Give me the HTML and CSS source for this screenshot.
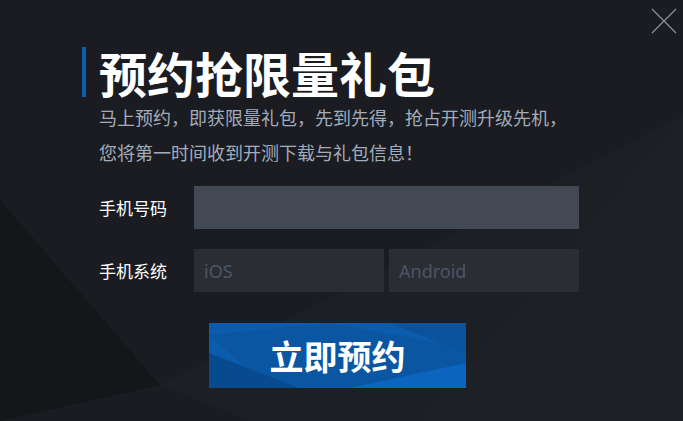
FILE: index.html
```html
<!DOCTYPE html>
<html lang="zh-CN">
<head>
    <meta charset="UTF-8">
    <meta name="viewport" content="width=device-width, initial-scale=1.0">
    <title>预约抢限量礼包</title>
    <link rel="stylesheet" href="styles.css">
</head>
<body>
    <div class="dialog">
        <svg class="bg-shapes" width="683" height="421" viewBox="0 0 683 421">
            <polygon points="0,200 160,385 0,421" fill="#141619"/>
            <polygon points="683,115 683,421 250,421 160,385" fill="#1c1f23"/>
            <polygon points="683,115 683,421 420,421" fill="#1d2024"/>
        </svg>

        <button type="button" class="close-btn" aria-label="关闭">
            <svg width="28" height="28" viewBox="0 0 28 28">
                <path d="M2 2 L26 26 M26 2 L2 26" stroke="#8c9099" stroke-width="1.2" fill="none"/>
            </svg>
        </button>

        <h1 class="title">预约抢限量礼包</h1>
        <p class="intro">马上预约，即获限量礼包，先到先得，抢占开测升级先机，<br>您将第一时间收到开测下载与礼包信息！</p>

        <form id="order-form" class="order-form">
            <div class="form-row">
                <label for="phone">手机号码</label>
                <input type="tel" id="phone" name="phone" class="field field-phone">
            </div>
            <div class="form-row">
                <label>手机系统</label>
                <div class="os-group">
                    <button type="button" class="field os-btn">iOS</button>
                    <button type="button" class="field os-btn">Android</button>
                </div>
            </div>
            <button type="submit" class="submit-btn">
                <svg class="btn-shapes" width="257" height="65" viewBox="0 0 257 65">
                    <polygon points="0,0 257,0 257,65 0,65" fill="#0b5cad"/>
                    <polygon points="0,12 120,0 257,25 257,65 60,65" fill="#0a56a3"/>
                    <polygon points="0,30 90,65 0,65" fill="#084a8e"/>
                    <polygon points="140,65 257,40 257,65" fill="#0b64bd"/>
                    <polygon points="180,0 257,0 257,30" fill="#0a539c"/>
                </svg>
                <span>立即预约</span>
            </button>
        </form>
    </div>

    <script>
        document.querySelectorAll(".os-btn").forEach(function (btn) {
            btn.addEventListener("click", function () {
                document.querySelectorAll(".os-btn").forEach(b => b.classList.remove("active"));
                btn.classList.add("active");
            });
        });

        document.getElementById("order-form").addEventListener("submit", function (e) {
            e.preventDefault();
        });
    </script>
</body>
</html>
```

FILE: styles.css
```css
body {
    margin: 0;
    padding: 0;
    background-color: #1a1c21;
    font-family: "Noto Sans CJK SC", "Noto Sans", sans-serif;
}

.dialog {
    position: relative;
    width: 683px;
    height: 421px;
    overflow: hidden;
    box-sizing: border-box;
    padding: 47px 0 0 82px;
}

.bg-shapes {
    position: absolute;
    left: 0;
    top: 0;
    z-index: 0;
}

.dialog > *:not(.bg-shapes) {
    position: relative;
    z-index: 1;
}

.close-btn {
    position: absolute !important;
    top: 7px;
    right: 5px;
    width: 28px;
    height: 28px;
    padding: 0;
    border: none;
    background: none;
    cursor: pointer;
}

.close-btn svg {
    display: block;
}

.title {
    margin: 0;
    padding-left: 13px;
    border-left: 4px solid #0b5fb3;
    height: 50px;
    line-height: 50px;
    font-size: 48px;
    font-weight: 700;
    color: #ffffff;
}

.intro {
    margin: 3px 0 0 17px;
    font-size: 18px;
    line-height: 35px;
    color: #a2acbd;
}

.order-form {
    margin-top: 16px;
    padding-left: 17px;
}

.form-row {
    display: flex;
    align-items: center;
    margin-bottom: 20px;
}

.form-row label {
    width: 95px;
    font-size: 17px;
    color: #ffffff;
}

.field {
    height: 43px;
    border: none;
    border-radius: 0;
    box-sizing: border-box;
    font-family: "Noto Sans", "Noto Sans CJK SC", sans-serif;
    font-size: 18px;
    outline: none;
}

.field-phone {
    width: 385px;
    background: #424854;
    color: #ffffff;
    padding: 0 12px;
}

.os-group {
    display: flex;
    gap: 5px;
}

.os-btn {
    width: 190px;
    background: #2a2d34;
    color: #4d5564;
    text-align: left;
    padding: 0 10px;
    cursor: pointer;
}

.os-btn.active {
    color: #ffffff;
}

.submit-btn {
    position: relative;
    display: flex;
    align-items: center;
    justify-content: center;
    width: 257px;
    height: 65px;
    margin: 31px 0 0 110px;
    padding: 0;
    border: none;
    overflow: hidden;
    background: #0b5cad;
    cursor: pointer;
}

.btn-shapes {
    position: absolute;
    left: 0;
    top: 0;
}

.submit-btn span {
    position: relative;
    font-family: "Noto Sans CJK SC", sans-serif;
    font-size: 34px;
    font-weight: 700;
    color: #ffffff;
}
```
